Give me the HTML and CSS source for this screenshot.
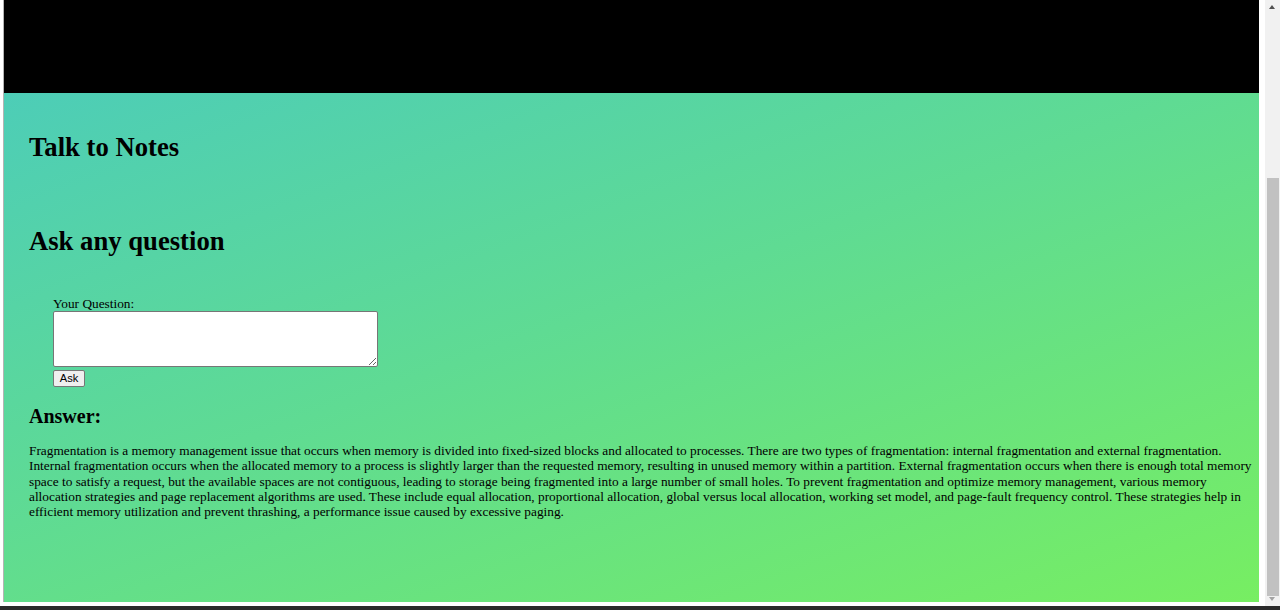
FILE: index.html
```html
<!DOCTYPE html>
<html lang="en">
<head>
<meta charset="utf-8">
<title>Talk to Notes</title>
<link rel="stylesheet" href="styles.css">
</head>
<body>
<div class="frame">
  <div class="edge-left"></div>
  <div class="viewport">
    <header class="topbar"></header>
    <main class="content">
      <h1 class="title">Talk to Notes</h1>
      <h1 class="subtitle">Ask any question</h1>
      <form class="ask-form">
        <label class="q-label" for="q">Your Question:</label>
        <textarea id="q" class="q-input"></textarea>
        <button type="button" class="ask-btn">Ask</button>
      </form>
      <h2 class="answer-title">Answer:</h2>
      <p class="answer">Fragmentation is a memory management issue that occurs when memory is divided into fixed-sized blocks and allocated to processes. There are two types of fragmentation: internal fragmentation and external fragmentation. Internal fragmentation occurs when the allocated memory to a process is slightly larger than the requested memory, resulting in unused memory within a partition. External fragmentation occurs when there is enough total memory space to satisfy a request, but the available spaces are not contiguous, leading to storage being fragmented into a large number of small holes. To prevent fragmentation and optimize memory management, various memory allocation strategies and page replacement algorithms are used. These include equal allocation, proportional allocation, global versus local allocation, working set model, and page-fault frequency control. These strategies help in efficient memory utilization and prevent thrashing, a performance issue caused by excessive paging.</p>
    </main>
  </div>
  <div class="edge-right"></div>
  <div class="scrollbar">
    <div class="sb-arrow sb-up"></div>
    <div class="sb-thumb"></div>
    <div class="sb-arrow sb-down"></div>
  </div>
</div>
<div class="bottom-line"></div>
</body>
</html>
```

FILE: styles.css
```css
html, body {
  margin: 0;
  padding: 0;
  background: #ffffff;
  overflow: hidden;
  height: 610px;
}

body {
  font-family: "Liberation Serif", "Times New Roman", serif;
  font-size: 13.33px;
  color: #000;
}

.frame {
  display: flex;
  height: 606px;
}

.edge-left {
  width: 3px;
  height: 602px;
  border-right: 1px solid #b4b4b4;
  background: #fff;
}

.viewport {
  width: 1255px;
  height: 602px;
  display: flex;
  flex-direction: column;
}

.topbar {
  height: 93px;
  background: #000;
  flex: none;
}

.content {
  flex: 1;
  background: linear-gradient(160deg, #4dcdb7 0%, #5fdb93 45%, #77ee62 100%);
  padding: 39px 0 0 25px;
  box-sizing: border-box;
}

.title, .subtitle {
  font-size: 26.67px;
  font-weight: bold;
  line-height: 30px;
  margin: 0;
}

.subtitle {
  margin-top: 64px;
}

.ask-form {
  margin: 40px 0 0 24px;
}

.q-label {
  display: block;
  line-height: 15px;
}

.q-input {
  display: block;
  width: 325px;
  height: 56px;
  box-sizing: border-box;
  border: 1px solid #767676;
  border-radius: 2px;
  background: #fff;
  margin: 0;
  padding: 2px;
  resize: vertical;
}

.ask-btn {
  display: block;
  margin-top: 3px;
  height: 17px;
  width: 32px;
  padding: 0 0 1px 0;
  font-family: "Liberation Sans", Arial, sans-serif;
  font-size: 11.1px;
  color: #000;
  background: #efefef;
  border: 1px solid #767676;
  border-radius: 2px;
  box-sizing: border-box;
  line-height: 13px;
}

.answer-title {
  font-size: 20px;
  font-weight: bold;
  line-height: 23px;
  margin: 18px 0 0 0;
}

.answer {
  margin: 15px 0 0 0;
  width: 1230px;
  line-height: 15.33px;
}

.edge-right {
  width: 6px;
  background: #fff;
}

.scrollbar {
  width: 15px;
  height: 606px;
  background: #f1f1f1;
  display: flex;
  flex-direction: column;
  align-items: flex-start;
}

.sb-arrow {
  width: 0;
  height: 0;
  border-left: 3.5px solid transparent;
  border-right: 3.5px solid transparent;
  margin-left: 4px;
}

.sb-up {
  margin-top: 5px;
  border-bottom: 4px solid #505050;
}

.sb-thumb {
  margin-top: 169px;
  margin-left: 2px;
  width: 12px;
  height: 418px;
  background: #c1c1c1;
}

.sb-down {
  margin-top: auto;
  margin-bottom: 5px;
  border-top: 4px solid #a3a3a3;
}

.bottom-line {
  height: 4px;
  background: #2a2a2a;
}
```
